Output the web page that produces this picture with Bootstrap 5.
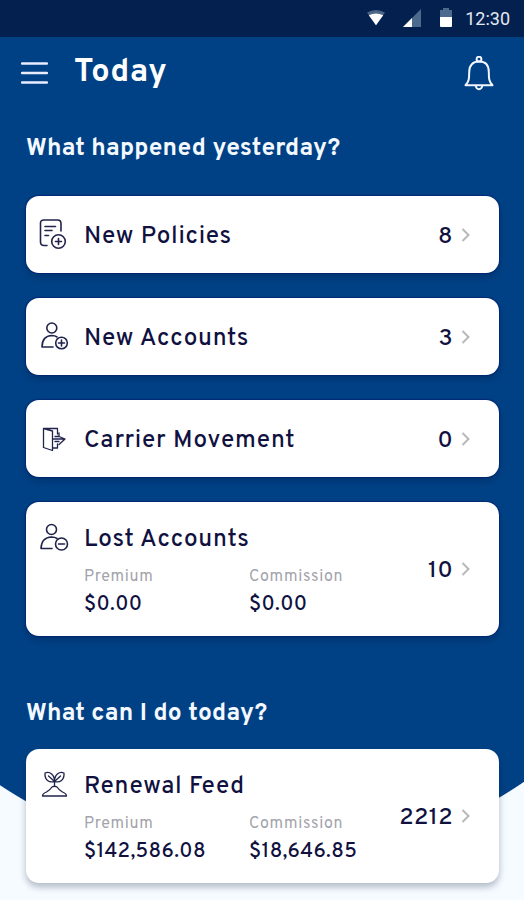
<!DOCTYPE html>
<html lang="en">
<head>
<meta charset="utf-8">
<meta name="viewport" content="width=device-width, initial-scale=1">
<title>Today</title>
<link href="https://cdn.jsdelivr.net/npm/bootstrap@5.3.0/dist/css/bootstrap.min.css" rel="stylesheet">
<style>
body{font-family:Overpass,Roboto,"Liberation Sans",sans-serif;color:#10113f;height:900px;overflow:hidden;
 background:radial-gradient(circle at 259.5px 394.5px,#004185 468.5px,#f5fbff 469.5px)}
.statusbar{height:37px;background:#03204f;padding-right:14px;color:#e4e8f0;font:18px Roboto,sans-serif}
.status-icons{gap:18px;margin-right:12px;padding-bottom:2px}
.topbar{height:73px;padding:0 30px 0 21px}
.page-title{font-size:32.5px;font-weight:700;letter-spacing:.6px;line-height:40px;padding-top:5px;margin:-6px 0 0 26px}
.section-title{font-size:24.5px;font-weight:700;letter-spacing:.2px;line-height:38px;height:32px;color:#f4f8ff;margin:0}
.feed{margin:0 25px 0 26px}
.tile{background:#fff;border-radius:13px;padding:0 24px 0 12px;box-shadow:0 0 1px 1px #03116c77,0 4px 7px rgba(0,15,50,.25)}
.tile-row{height:77px}
.tile-tall{height:134px}
.tile-name{font-size:24.3px;font-weight:500;letter-spacing:.72px;line-height:37px;height:32px}
.count{font-size:23.5px;font-weight:500;letter-spacing:.4px;line-height:37px;height:32px;margin-right:1px}
.glyph{width:32px;height:32px;flex:none}
.label-text{font-size:16px;color:#a3a3ab;letter-spacing:.65px;line-height:24px;height:22px;font-weight:400}
.amount{font-size:20.5px;font-weight:500;letter-spacing:.33px;line-height:32px;height:28px;margin-top:2px}
.figure-col{width:165px}
.ink{fill:none;stroke:#20234c;stroke-width:1.6;stroke-linecap:round;stroke-linejoin:round}
.ink-thin{stroke-width:1.3}
.arrow{fill:none;stroke:#b8b8bc;stroke-width:2}
.chevron{margin-left:5px}
.tile-list{gap:25px;margin-top:34px}
.todo{margin-top:59px}
.todo .tile{margin-top:22px;box-shadow:0 4px 7px rgba(0,15,50,.28)}
.tile-row .tile-name,.tile-body{margin-left:14px}
.tile-body{padding-top:20px}
.figures{margin-top:11px}
.lead-glyph{margin-top:19px}
</style>
</head>
<body>
<div class="statusbar d-flex align-items-center justify-content-end">
  <div class="status-icons d-flex align-items-center">
  <svg width="18" height="18" viewBox="0 0 20 18"><path d="M0 3Q10-3 20 3L10 17Z" fill="#4d6686"/><path d="M2 6Q10 2 18 6L10 17Z" fill="#fff"/></svg>
  <svg width="18" height="18" viewBox="0 0 18 18"><path d="M18 0V18H0Z" fill="#4b6a8e"/><path d="M9 9V18H0Z" fill="#fff"/></svg>
  <svg width="14" height="19" viewBox="0 0 14 19"><path d="M1 2H4V0H10V2H13V9H1Z" fill="#4b6a8e"/><path d="M1 9H13V18Q13 19 12 19H2Q1 19 1 18Z" fill="#fff"/></svg>
  </div>
  <span>12:30</span>
</div>
<header class="topbar d-flex align-items-center text-white">
  <svg width="27" height="24" viewBox="0 0 27 24"><path d="M1 1.500H26M1 11H26M1 20.500H26" stroke="#e9edff" stroke-width="2.500" stroke-linecap="round"/></svg>
  <h1 class="page-title">Today</h1>
  <svg class="ms-auto" width="30" height="36" viewBox="0 0 30 36" fill="none" stroke="#f3f5ff" stroke-width="2" stroke-linejoin="round"><circle cx="15" cy="3.200" r="2.400"/><path d="M1.500 29.300C5 25.500 5.200 22.500 5.200 16C5.200 9 9 5.600 15 5.600S24.800 9 24.800 16C24.800 22.500 25 25.500 28.500 29.300Z"/><path d="M11.800 29.500a3.200 3.700 0 0 0 6.400 0"/></svg>
</header>
<main class="feed">
  <section class="pt-3 mt-1">
    <h2 class="section-title">What happened yesterday?</h2>
    <div class="tile-list d-flex flex-column">
      <div class="tile tile-row d-flex align-items-center">
        <svg class="glyph" viewBox="0 0 32 32"><g class="ink"><path d="M9 26.500H6Q2.500 26.500 2.500 23V4Q2.500 1 6 1H19.500Q23 1 23 4.500V12M7 7.500H17.500M7 11.500H14M7 16.500H10.500"/><circle cx="20.500" cy="22.500" r="6.800"/><path d="M17.500 22.500H23.500M20.500 19.500V25.500"/></g></svg>
        <span class="tile-name">New Policies</span><span class="count ms-auto">8</span>
        <svg class="chevron" width="16" height="18" viewBox="0 0 16 18"><path class="arrow" d="M3.500 3L9.500 9L3.500 15"/></svg>
      </div>
      <div class="tile tile-row d-flex align-items-center">
        <svg class="glyph" viewBox="0 0 32 32"><g class="ink"><circle cx="13.800" cy="7" r="5"/><path d="M15 26H4Q4 15 14 14.500Q17 14.500 19 16"/><circle cx="23.500" cy="22" r="5.800"/><path d="M20.500 22H26.500M23.500 19V25"/></g></svg>
        <span class="tile-name">New Accounts</span><span class="count ms-auto">3</span>
        <svg class="chevron" width="16" height="18" viewBox="0 0 16 18"><path class="arrow" d="M3.500 3L9.500 9L3.500 15"/></svg>
      </div>
      <div class="tile tile-row d-flex align-items-center">
        <svg class="glyph" viewBox="0 0 32 32"><g class="ink ink-thin"><path d="M5.500 5.500L14.500 8V27.500L5.500 24.500ZM5.500 5.500H19.500V11M14.500 25H19.500V21M15.500 16H27M21 10V13.500L27 16L21 21.500M17 13.500H21M17 18.500H21"/></g></svg>
        <span class="tile-name">Carrier Movement</span><span class="count ms-auto">0</span>
        <svg class="chevron" width="16" height="18" viewBox="0 0 16 18"><path class="arrow" d="M3.500 3L9.500 9L3.500 15"/></svg>
      </div>
      <div class="tile tile-tall d-flex">
        <svg class="glyph lead-glyph" viewBox="0 0 32 32"><g class="ink"><circle cx="13.500" cy="8.500" r="5"/><path d="M14 27.500H3Q3.500 16.500 13.500 16Q17 16 19 17.500"/><circle cx="23.500" cy="23" r="6"/><path d="M20.500 23H26.500"/></g></svg>
        <div class="tile-body"><div class="tile-name">Lost Accounts</div>
          <div class="d-flex figures">
            <div class="figure-col"><div class="label-text">Premium</div><div class="amount">$0.00</div></div>
            <div><div class="label-text">Commission</div><div class="amount">$0.00</div></div>
          </div></div>
        <div class="d-flex align-items-center ms-auto"><span class="count">10</span>
        <svg class="chevron" width="16" height="18" viewBox="0 0 16 18"><path class="arrow" d="M3.500 3L9.500 9L3.500 15"/></svg></div>
      </div>
    </div>
  </section>
  <section class="todo">
    <h2 class="section-title">What can I do today?</h2>
    <div class="tile tile-tall d-flex">
      <svg class="glyph lead-glyph" viewBox="0 0 32 32"><g class="ink ink-thin"><path d="M16.500 18V13M16.500 13.500C11 15 6.500 12 7 5C12 3 16.500 7 16.500 13.500C16.500 7 21 3 26 5C26.500 12 22 15 16.500 13.500M10.500 8L16.500 13.500L22.500 8M4.500 28Q4.500 25.500 8.500 24Q12.500 21.500 14 19Q16.500 17.500 19 19Q20.500 21.500 24.500 24Q28.500 25.500 28.500 28Z"/></g></svg>
      <div class="tile-body"><div class="tile-name">Renewal Feed</div>
        <div class="d-flex figures">
          <div class="figure-col"><div class="label-text">Premium</div><div class="amount">$142,586.08</div></div>
          <div><div class="label-text">Commission</div><div class="amount">$18,646.85</div></div>
        </div></div>
      <div class="d-flex align-items-center ms-auto"><span class="count">2212</span>
      <svg class="chevron" width="16" height="18" viewBox="0 0 16 18"><path class="arrow" d="M3.500 3L9.500 9L3.500 15"/></svg></div>
    </div>
  </section>
</main>
<script src="https://cdn.jsdelivr.net/npm/bootstrap@5.3.0/dist/js/bootstrap.bundle.min.js"></script>
</body>
</html>
